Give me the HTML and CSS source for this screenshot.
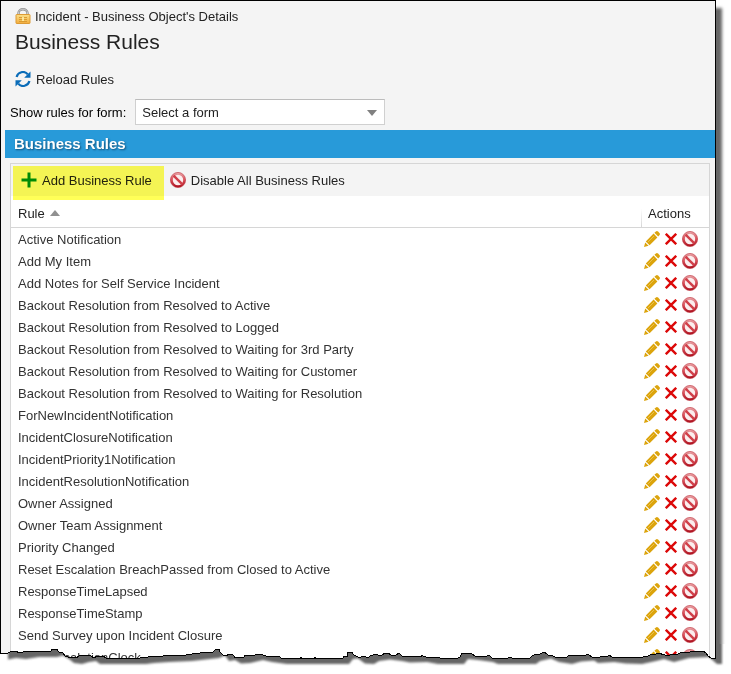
FILE: index.html
```html
<!DOCTYPE html>
<html lang="en">
<head>
<meta charset="utf-8">
<title>Business Rules</title>
<link rel="stylesheet" href="styles.css">
</head>
<body>
<svg class="defs" aria-hidden="true">
  <defs>
    <linearGradient id="red" x1="0" y1="0" x2="0" y2="1">
      <stop offset="0" stop-color="#e79a9e"/><stop offset=".5" stop-color="#d9505a"/><stop offset="1" stop-color="#b01624"/>
    </linearGradient>
    <linearGradient id="gold" x1="0" y1="0" x2="0" y2="1">
      <stop offset="0" stop-color="#fbe08a"/><stop offset="1" stop-color="#f2ac3c"/>
    </linearGradient>
    <symbol id="ban" viewBox="0 0 16 16">
      <circle cx="8" cy="8" r="6.4" fill="#fbeeee" stroke="url(#red)" stroke-width="2.4"/>
      <path d="M3.6 3.6 12.4 12.4" stroke="#d0404a" stroke-width="2.4"/>
      <circle cx="8" cy="8" r="7.6" fill="none" stroke="#bd303a" stroke-width=".6"/>
    </symbol>
    <symbol id="pencil" viewBox="0 0 16 16">
      <path fill="#dca40c" d="M0 16 1.2 11.4 4.6 14.8ZM1.8 10.4 9.6 2.6 13.4 6.4 5.6 14.2ZM10.4 1.8 11.9.4Q13 -.4 14.1.6L15.4 1.9Q16.4 3 15.6 4.1L14.2 5.6Z"/>
      <path stroke="#f0ca60" stroke-width=".8" d="M3.8 11.2 10 5"/>
    </symbol>
    <symbol id="cross" viewBox="0 0 12 12">
      <path d="M.8 .8 11.2 11.2M11.2 .8 .8 11.2" stroke="#dc0808" stroke-width="2.4"/>
    </symbol>
  </defs>
</svg>
<div class="page">
  <main class="frame">
    <div class="crumb">
      <svg class="icon" viewBox="0 0 16 16" aria-hidden="true">
        <path d="M3.5 8V5a4.500 3.800 0 0 1 9 0v3" fill="none" stroke="#8f8f8f" stroke-width="2.400"/>
        <path d="M3.500 8V5a4.500 3.800 0 0 1 9 0v3" fill="none" stroke="#d4d4d4" stroke-width=".9"/>
        <rect x="1" y="6.500" width="14" height="9" rx=".6" fill="url(#gold)" stroke="#dc9a34"/>
        <path d="M4 9.500h8M4 11.500h8M4 13.500h8" stroke="#d6962c" stroke-width=".9"/>
        <path d="M8 9v4" stroke="#fff3b0" stroke-width="1.600"/>
      </svg>
      <span class="text">Incident - Business Object's Details</span>
    </div>
    <h1 class="title">Business Rules</h1>
    <button class="reload" type="button">
      <svg class="icon" viewBox="0 0 16 16" aria-hidden="true">
        <path d="M1.600 6A6.400 6.400 0 0 1 12.800 3.400M14.400 10A6.400 6.400 0 0 1 3.200 12.600" fill="none" stroke="#0b6cb8" stroke-width="2.200"/>
        <path d="M15.500 .5v6.300H9.200ZM.5 15.500V9.200h6.300Z" fill="#0b6cb8"/>
      </svg>
      <span class="text">Reload Rules</span>
    </button>
    <div class="picker">
      <label class="text" for="form">Show rules for form:</label>
      <div class="select">
        <select id="form"><option>Select a form</option></select>
        <svg class="arrow" viewBox="0 0 10 6" aria-hidden="true"><path d="M0 0h10L5 6Z" fill="#808080"/></svg>
      </div>
    </div>
    <h2 class="banner">Business Rules</h2>
    <section class="panel">
      <div class="toolbar">
        <button class="tool add" type="button">
          <svg class="icon" viewBox="0 0 16 16" aria-hidden="true"><path d="M8 .5v15M.5 8h15" stroke="#008a0e" stroke-width="3"/></svg>
          <span class="text">Add Business Rule</span>
        </button>
        <button class="tool" type="button">
          <svg class="icon" aria-hidden="true"><use href="#ban"/></svg>
          <span class="text">Disable All Business Rules</span>
        </button>
      </div>
      <table class="rules">
        <thead>
          <tr>
            <th scope="col">Rule <svg class="sort" viewBox="0 0 10 6" aria-hidden="true"><path d="M0 6h10L5 0Z" fill="#909090"/></svg></th>
            <th scope="col" class="actions">Actions</th>
          </tr>
        </thead>
        <tbody id="rows"></tbody>
      </table>
    </section>
  </main>
  <svg class="tear" viewBox="0 644 731 30" preserveAspectRatio="none" aria-hidden="true">
    <defs>
      <path id="edge" d="M-5 653.5H7L10 652 15 651 20 653 25 651.5 33 651 35 652 45 651.5 51 651 52 649.5H57L59 652 63 653 65 656 68 657 76 658 80 655.5 83 656 90 655 94 658 97 656H103L106 658H140L148 657 155 656H163L165 655 172 656 180 655H186L188 654H192L193 653 195 654 200 653 207 652.5 213 652 215 650 219 649.5 220 652 223 655 226 656 229 654 233 655 235 657.5 244 657 245 655.5 255 655 257 654 262 654.5 266 656H273L275 657 279 656 281 658H300V657H301V658H314V657H315V658H343L344 656 347 656V653L352 652.5 354 655 359 657.5 363 656.5 366 657 368 658 370 656 373 655 377 654.5 381 656 384 653.5H389L391 655H396L399 653 402 656 404 656.5H421L422 655.5 426 657 432 658 436 657 440 658H458L460 657 462 653H466L472 654 475 656H487L489 655 492 658H508L510 657 512 658H530L532 656 534 655 540 654 542 653 545 652.5 548 655 553 656 555 657H563L566 658 568 656 575 655.5 583 656 588 654.5 592 657H600L602 656H608L610 655.5 612 657 620 657.5 636 658 643 657 648 656 650 655 655 654.5 658 653 665 655 668 656 672 654 675 655 683 652 687 653 690 652 703 651 706 653 708 656 711 658H715.5V640H740V680H-5Z"/>
      <clipPath id="below"><use href="#edge"/></clipPath>
      <filter id="soft" x="-5%" y="-50%" width="110%" height="200%"><feGaussianBlur stdDeviation="1.3"/></filter>
    </defs>
    <g clip-path="url(#below)">
      <rect x="0" y="643" width="731" height="32" fill="#fff"/>
      <g filter="url(#soft)">
        <path transform="translate(6 6)" fill="#666" d="M2 600V653.500L10 652 20 653 33 651 51 651 57 649.500 63 653 68 657 76 658 83 656 90 655 94 658 106 658 140 658 148 657 163 656 186 655 195 654 213 652 219 649.500 223 655 229 654 235 657.500 244 657 257 654 266 656 281 658 343 658 347 653 352 652.500 359 657.500 368 658 373 655 384 653.500 396 655 404 656.500 421 656 432 658 458 658 462 653 472 654 487 656 492 658 530 658 534 655 545 652.500 553 656 566 658 575 655.500 588 654.500 592 657 608 656 620 657.500 636 658 650 655 658 653 668 656 683 652 703 651 711 658H716V600Z"/>
      </g>
    </g>
    <use href="#edge" fill="none" stroke="#000" stroke-width="1" shape-rendering="crispEdges"/>
  </svg>
</div>
<script src="rules.js"></script>
</body>
</html>
```
FILE: styles.css
```css
* {
  box-sizing: border-box;
}

body {
  margin: 0;
  background: #fff;
  color: #222;
  font: 13px/16px "Liberation Sans", Arial, sans-serif;
}

button,
select {
  font: inherit;
  color: inherit;
}

button {
  padding: 0;
  border: 0;
  background: none;
}

h1,
h2 {
  margin: 0;
}

.defs {
  position: absolute;
  width: 0;
  height: 0;
}

.page {
  overflow: hidden;
}

.frame {
  margin-right: 15px;
  padding: 6px 0 0 4px;
  border: 1px solid #000;
  border-bottom: 0;
  background: #f4f4f4;
  box-shadow: 6px 8px 3px #666;
}

.icon {
  width: 16px;
  height: 16px;
  flex: none;
}

.text {
  padding-top: 2px;
}

.crumb {
  display: flex;
  align-items: center;
  gap: 4px;
  padding-left: 10px;
}

.title {
  padding: 4px 0 0 10px;
  font-size: 21px;
  line-height: 26px;
  font-weight: normal;
}

.reload {
  display: flex;
  align-items: center;
  gap: 5px;
  margin: 15px 0 11px 10px;
}

.picker {
  display: flex;
  align-items: center;
  gap: 9px;
  padding-left: 5px;
  color: #000;
}

.select {
  position: relative;
  width: 250px;
}

.select select {
  display: block;
  width: 100%;
  height: 26px;
  padding: 2px 24px 0 6px;
  border: 1px solid #d0d0d0;
  border-top-color: #bcbcbc;
  border-radius: 0;
  background: #fff;
  color: #222;
  appearance: none;
}

.arrow {
  position: absolute;
  top: 11px;
  right: 8px;
  width: 10px;
  height: 6px;
  pointer-events: none;
}

.banner {
  margin-top: 5px;
  padding-left: 9px;
  background: #289ad9;
  color: #fff;
  font-size: 15px;
  line-height: 28px;
  text-shadow: 1px 1px 2px #145078;
}

.panel {
  margin: 5px 5px 0;
  border: 1px solid #d6d6d6;
  border-bottom: 0;
  background: #fff;
}

.toolbar {
  display: flex;
  height: 32px;
  padding-left: 2px;
  background: #f4f4f4;
}

.tool {
  display: flex;
  align-items: center;
  gap: 5px;
  height: 32px;
  padding: 0 6px;
}

.add {
  position: relative;
  padding: 0 12px 0 8px;
}

.add::after {
  content: "";
  position: absolute;
  inset: 2px 0 -4px;
  background: #ffff58;
  mix-blend-mode: multiply;
}

.rules {
  width: 100%;
  border-collapse: separate;
  border-spacing: 0;
  table-layout: fixed;
}

.rules th {
  height: 32px;
  padding: 4px 7px 0;
  border-bottom: 1px solid #d6d6d6;
  font-weight: normal;
  text-align: left;
}

.rules td {
  height: 22px;
  padding: 2px 7px 0;
  color: #333;
}

.rules th.actions {
  width: 68px;
  background: linear-gradient(#fff 40%, #d6d6d6) left / 1px 100% no-repeat;
}

.sort {
  width: 10px;
  height: 6px;
  margin: 0 0 2px 2px;
}

.rules td.actions {
  padding: 0 0 0 3px;
}

.buttons {
  display: flex;
  align-items: center;
  gap: 5px;
}

.buttons button {
  display: flex;
}

.buttons .cross {
  width: 12px;
  height: 12px;
}

.tear {
  position: relative;
  display: block;
  width: 100%;
  height: 30px;
  margin-top: -24px;
}
```
FILE: rules.js
```js
const rules = [
  "Active Notification",
  "Add My Item",
  "Add Notes for Self Service Incident",
  "Backout Resolution from Resolved to Active",
  "Backout Resolution from Resolved to Logged",
  "Backout Resolution from Resolved to Waiting for 3rd Party",
  "Backout Resolution from Resolved to Waiting for Customer",
  "Backout Resolution from Resolved to Waiting for Resolution",
  "ForNewIncidentNotification",
  "IncidentClosureNotification",
  "IncidentPriority1Notification",
  "IncidentResolutionNotification",
  "Owner Assigned",
  "Owner Team Assignment",
  "Priority Changed",
  "Reset Escalation BreachPassed from Closed to Active",
  "ResponseTimeLapsed",
  "ResponseTimeStamp",
  "Send Survey upon Incident Closure",
  "Stop EscalationClock"
];

const action = (icon, label) =>
  `<button type="button" aria-label="${label}"><svg class="icon ${icon}"><use href="#${icon}"/></svg></button>`;

document.getElementById("rows").innerHTML = rules.map(rule => `
  <tr>
    <td>${rule}</td>
    <td class="actions"><div class="buttons">
      ${action("pencil", "Edit")}${action("cross", "Delete")}${action("ban", "Disable")}
    </div></td>
  </tr>`).join("");
```
